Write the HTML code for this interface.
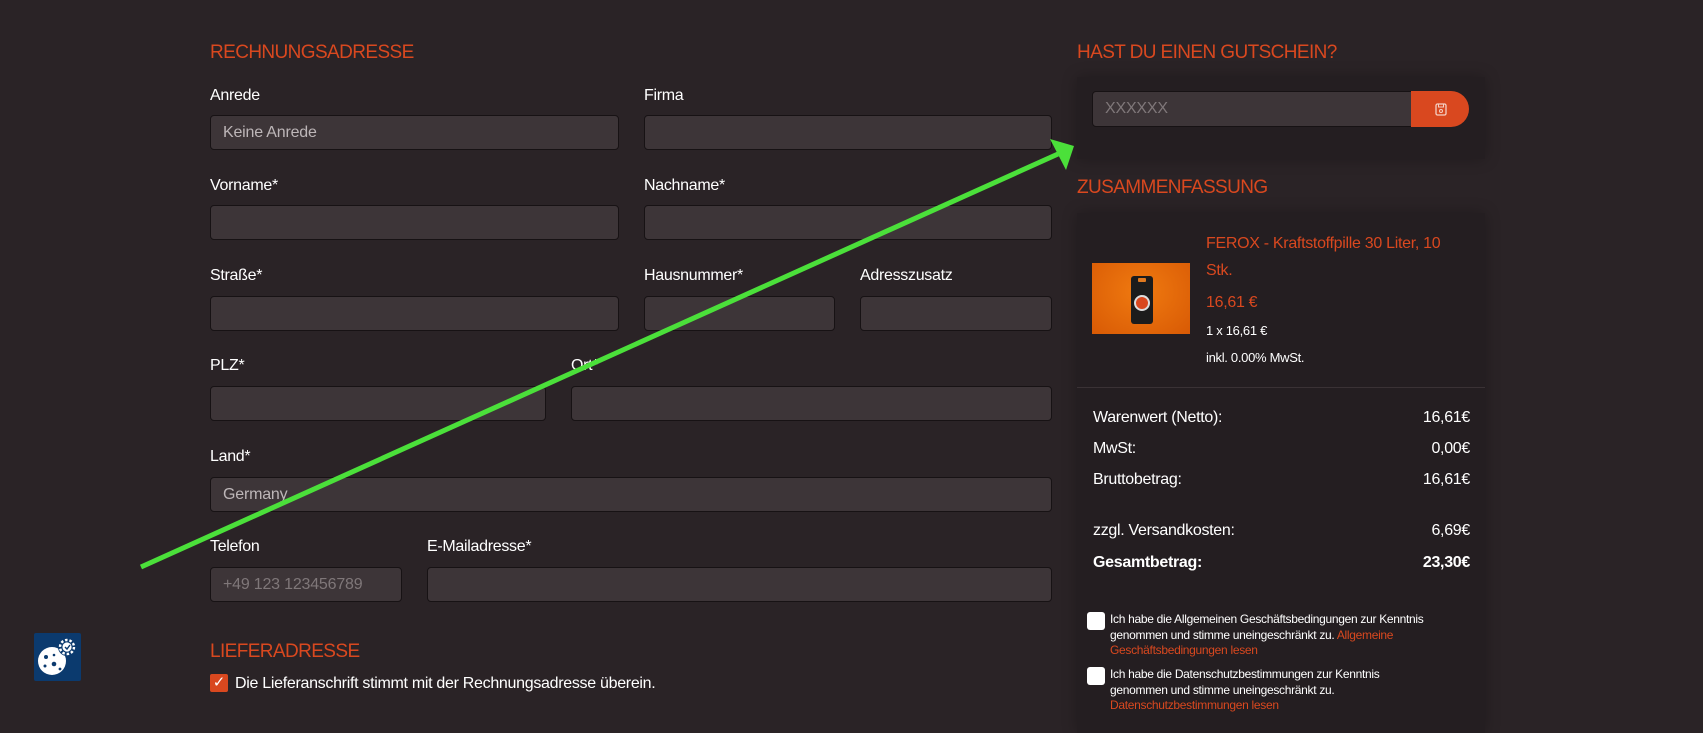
<!DOCTYPE html>
<html><head><meta charset="utf-8"><style>
*{box-sizing:border-box;margin:0;padding:0}
body{width:1703px;height:715px;background:#2a2326;font-family:"Liberation Sans","DejaVu Sans",sans-serif;color:#fff;position:relative;overflow:hidden}
.a{position:absolute}
.h{color:#d9481f;font-size:19px;letter-spacing:-0.6px;font-weight:normal;line-height:22px}
.l{font-size:16px;letter-spacing:-0.3px;line-height:20px}
.in{position:absolute;height:35px;background:#3d3538;border:1px solid #171214;border-radius:4px;font-size:16px;color:#bdb6b8;padding:8px 12px;letter-spacing:-0.2px}
.ph{color:#7f7779}
.panel{position:absolute;background:#241e21;box-shadow:0 0 14px rgba(0,0,0,.25)}
.r{position:absolute;font-size:16px;letter-spacing:-0.3px;line-height:20px}
.cb{position:absolute;width:18px;height:18px;background:#fff;border-radius:3px}
.s{position:absolute;font-size:12px;letter-spacing:-0.3px;line-height:15.5px;color:#fff}
.o{color:#d9481f}
</style></head><body>
<div class="a h" style="left:210px;top:42px">RECHNUNGSADRESSE</div>
<div class="a l" style="left:210px;top:86px">Anrede</div>
<div class="a l" style="left:644px;top:86px">Firma</div>
<div class="in" style="left:210px;top:115px;width:409px">Keine Anrede</div>
<div class="in" style="left:644px;top:115px;width:408px"></div>
<div class="a l" style="left:210px;top:176px">Vorname*</div>
<div class="a l" style="left:644px;top:176px">Nachname*</div>
<div class="in" style="left:210px;top:205px;width:409px"></div>
<div class="in" style="left:644px;top:205px;width:408px"></div>
<div class="a l" style="left:210px;top:266px">Straße*</div>
<div class="a l" style="left:644px;top:266px">Hausnummer*</div>
<div class="a l" style="left:860px;top:266px">Adresszusatz</div>
<div class="in" style="left:210px;top:296px;width:409px"></div>
<div class="in" style="left:644px;top:296px;width:191px"></div>
<div class="in" style="left:860px;top:296px;width:192px"></div>
<div class="a l" style="left:210px;top:356px">PLZ*</div>
<div class="a l" style="left:571px;top:356px">Ort*</div>
<div class="in" style="left:210px;top:386px;width:336px"></div>
<div class="in" style="left:571px;top:386px;width:481px"></div>
<div class="a l" style="left:210px;top:447px">Land*</div>
<div class="in" style="left:210px;top:477px;width:842px">Germany</div>
<div class="a l" style="left:210px;top:537px">Telefon</div>
<div class="a l" style="left:427px;top:537px">E-Mailadresse*</div>
<div class="in ph" style="left:210px;top:567px;width:192px">+49 123 123456789</div>
<div class="in" style="left:427px;top:567px;width:625px"></div>
<div class="a h" style="left:210px;top:641px">LIEFERADRESSE</div>
<div class="a" style="left:210px;top:674px;width:18px;height:18px;background:#d9481f;border-radius:2px;color:#fff;font-size:15px;line-height:18px;text-align:center">✓</div>
<div class="a l" style="left:235px;top:674px">Die Lieferanschrift stimmt mit der Rechnungsadresse überein.</div>

<div class="a" style="left:34px;top:633px;width:47px;height:48px;background:#0b3a6e;border-radius:2px">
<svg width="47" height="48" viewBox="0 0 47 48"><circle cx="18" cy="28" r="14" fill="#fff"/><circle cx="12" cy="24" r="2" fill="#0b3a6e"/><circle cx="20" cy="31" r="2.3" fill="#0b3a6e"/><circle cx="11" cy="33" r="1.5" fill="#0b3a6e"/><circle cx="20" cy="22" r="1.3" fill="#0b3a6e"/><circle cx="26" cy="36" r="1.4" fill="#0b3a6e"/><circle cx="33" cy="14" r="9" fill="#0b3a6e"/><circle cx="33" cy="14" r="7" fill="none" stroke="#fff" stroke-width="2.4" stroke-dasharray="2.5 1.9"/><circle cx="33" cy="14" r="4.6" fill="#fff"/><path d="M31 14l2 2 3-4" stroke="#0b3a6e" stroke-width="1.4" fill="none"/></svg></div>

<div class="a h" style="left:1077px;top:42px">HAST DU EINEN GUTSCHEIN?</div>
<div class="panel" style="left:1077px;top:77px;width:408px;height:82px"></div>
<div class="in ph" style="left:1092px;top:91px;width:330px;height:36px;border-radius:4px 0 0 4px;font-size:16px">XXXXXX</div>
<div class="a" style="left:1411px;top:91px;width:58px;height:36px;background:#d9481f;border-radius:0 18px 18px 0">
<svg width="58" height="36"><rect x="25" y="13" width="10" height="11" rx="1.5" fill="none" stroke="#f4d0c4" stroke-width="1.3"/><rect x="27.5" y="13" width="5" height="3" fill="none" stroke="#f4d0c4" stroke-width="1"/><circle cx="30" cy="20" r="1.5" fill="none" stroke="#f4d0c4" stroke-width="1"/></svg></div>
<div class="a h" style="left:1077px;top:177px">ZUSAMMENFASSUNG</div>
<div class="panel" style="left:1077px;top:213px;width:408px;height:520px"></div>
<div class="a" style="left:1092px;top:263px;width:98px;height:71px;background:radial-gradient(ellipse at 50% 40%,#f07a10,#d85a05)">
<div class="a" style="left:39px;top:13px;width:22px;height:48px;background:#1c1c1c;border-radius:3px"></div>
<div class="a" style="left:46px;top:15px;width:8px;height:4px;background:#e07a20;border-radius:1px"></div>
<div class="a" style="left:42px;top:32px;width:16px;height:16px;border:2px solid #ddd;border-radius:50%;background:#d9481f"></div></div>
<div class="r o" style="left:1206px;top:230px;line-height:27px;width:245px">FEROX - Kraftstoffpille 30 Liter, 10 Stk.</div>
<div class="r o" style="left:1206px;top:293px">16,61 €</div>
<div class="s" style="left:1206px;top:323px;font-size:13px">1 x 16,61 €</div>
<div class="s" style="left:1206px;top:350px;font-size:13px">inkl. 0.00% MwSt.</div>
<div class="a" style="left:1077px;top:387px;width:408px;height:1px;background:#3a3235"></div>
<div class="r" style="left:1093px;top:408px">Warenwert (Netto):</div><div class="r" style="right:233px;top:408px">16,61€</div>
<div class="r" style="left:1093px;top:439px">MwSt:</div><div class="r" style="right:233px;top:439px">0,00€</div>
<div class="r" style="left:1093px;top:470px">Bruttobetrag:</div><div class="r" style="right:233px;top:470px">16,61€</div>
<div class="r" style="left:1093px;top:521px">zzgl. Versandkosten:</div><div class="r" style="right:233px;top:521px">6,69€</div>
<div class="r" style="left:1093px;top:553px;font-weight:bold">Gesamtbetrag:</div><div class="r" style="right:233px;top:553px;font-weight:bold">23,30€</div>
<div class="cb" style="left:1087px;top:612px"></div>
<div class="s" style="left:1110px;top:612px;width:330px">Ich habe die Allgemeinen Geschäftsbedingungen zur Kenntnis genommen und stimme uneingeschränkt zu. <span class="o">Allgemeine Geschäftsbedingungen lesen</span></div>
<div class="cb" style="left:1087px;top:667px"></div>
<div class="s" style="left:1110px;top:667px;width:300px">Ich habe die Datenschutzbestimmungen zur Kenntnis genommen und stimme uneingeschränkt zu. <span class="o">Datenschutzbestimmungen lesen</span></div>

<svg class="a" style="left:0;top:0" width="1703" height="715"><g fill="#4be03a"><line x1="141" y1="567" x2="1058" y2="154" stroke="#4be03a" stroke-width="5"/><polygon points="1074,146 1050,139 1066,170"/></g></svg>
</body></html>
